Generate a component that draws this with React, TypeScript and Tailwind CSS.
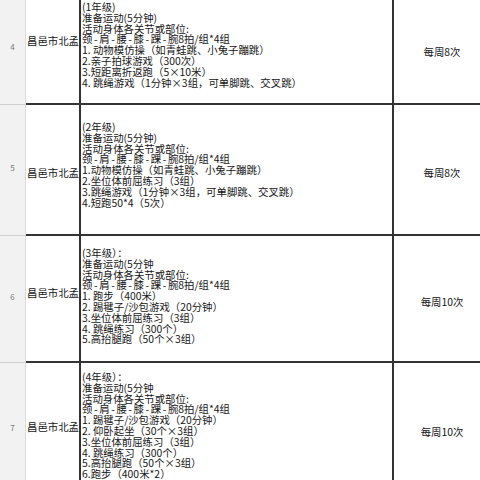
import type { FC } from "react";

interface PlanRow {
  no: string;
  height: string;
  noPt: string;
  locPt: string;
  textPt: string;
  freqPt: string;
  freq: string;
  lines: string[];
}

const warmup = ["准备运动(5分钟)", "活动身体各关节或部位:", "颈-肩-腰-膝-踝-腕8拍/组*4组"];
const warmupOpen = ["准备运动(5分钟", "活动身体各关节或部位:", "颈-肩-腰-膝-踝-腕8拍/组*4组"];

const rows: PlanRow[] = [
  {
    no: "4",
    height: "h-[105px]",
    noPt: "pt-[42px]",
    locPt: "pt-[35px]",
    textPt: "pt-[2px]",
    freqPt: "pt-[46px]",
    freq: "每周8次",
    lines: [
      "(1年级)",
      ...warmup,
      "1. 动物模仿操（如青蛙跳、小兔子蹦跳）",
      "2.亲子拍球游戏（300次）",
      "3.短距离折返跑（5×10米）",
      "4. 跳绳游戏（1分钟×3组，可单脚跳、交叉跳）",
    ],
  },
  {
    no: "5",
    height: "h-[131px]",
    noPt: "pt-[58px]",
    locPt: "pt-[62px]",
    textPt: "pt-[17px]",
    freqPt: "pt-[62px]",
    freq: "每周8次",
    lines: [
      "(2年级)",
      ...warmup,
      "1.动物模仿操（如青蛙跳、小兔子蹦跳）",
      "2.坐位体前屈练习（3组）",
      "3.跳绳游戏（1分钟×3组，可单脚跳、交叉跳）",
      "4.短跑50*4（5次）",
    ],
  },
  {
    no: "6",
    height: "h-[127px]",
    noPt: "pt-[56px]",
    locPt: "pt-[51px]",
    textPt: "pt-[12px]",
    freqPt: "pt-[60px]",
    freq: "每周10次",
    lines: [
      "(3年级）：",
      ...warmupOpen,
      "1. 跑步（400米）",
      "2. 踢毽子/沙包游戏（20分钟）",
      "3.坐位体前屈练习（3组）",
      "4. 跳绳练习（300个）",
      "5.高抬腿跑（50个×3组）",
    ],
  },
  {
    no: "7",
    height: "h-[130px]",
    noPt: "pt-[60px]",
    locPt: "pt-[58px]",
    textPt: "pt-[9px]",
    freqPt: "pt-[63px]",
    freq: "每周10次",
    lines: [
      "(4年级）：",
      ...warmupOpen,
      "1.  踢毽子/沙包游戏（20分钟）",
      "2. 仰卧起坐（30个×3组）",
      "3.坐位体前屈练习（3组）",
      "4. 跳绳练习（300个）",
      "5.高抬腿跑（50个×3组）",
      "6.跑步（400米*2）",
    ],
  },
];

// the source font draws "-" noticeably wider, so pad each dash a little
const Line: FC<{ text: string }> = ({ text }) => {
  const parts = text.split("-");
  return (
    <div>
      {parts.map((p, i) => (
        <span key={i}>
          {i > 0 ? <span className="mx-[1.6px]">-</span> : null}
          {p}
        </span>
      ))}
    </div>
  );
};

const App: FC = () => {
  return (
    <div
      className="w-[480px] h-[480px] overflow-hidden bg-white text-[#151515]"
      style={{ fontFamily: '"Noto Sans CJK SC", "Noto Sans", sans-serif' }}
    >
      {rows.map((row) => (
        <div key={row.no} className={`flex w-[500px] ${row.height}`}>
          <div
            className={`w-[26px] shrink-0 bg-[#f2f2f2] border-r border-b border-r-[#dcdcdc] border-b-[#cfcfcf] text-center text-[8px] leading-[10px] text-[#777] ${row.noPt}`}
          >
            {row.no}
          </div>
          <div
            className={`w-[55px] shrink-0 border-r-2 border-b-2 border-[#333] pl-px text-[10.4px] leading-[12px] whitespace-nowrap ${row.locPt}`}
          >
            昌邑市北孟
          </div>
          <div
            className={`w-[313px] shrink-0 border-r-2 border-b-2 border-[#333] pl-px text-[10.4px] leading-[10.8px] whitespace-nowrap ${row.textPt}`}
          >
            {row.lines.map((line, i) => (
              <Line key={i} text={line} />
            ))}
          </div>
          <div
            className={`w-[96px] shrink-0 border-b-2 border-[#333] text-center text-[10.4px] leading-[12px] ${row.freqPt}`}
          >
            {row.freq}
          </div>
        </div>
      ))}
    </div>
  );
};

export default App;
